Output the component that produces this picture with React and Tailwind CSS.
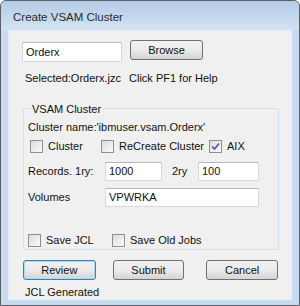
import { useState } from 'react'

function CheckBox({ checked, label, onChange, className = '' }) {
  return (
    <label className={`flex items-center gap-[5px] cursor-default ${className}`}>
      <span
        onClick={onChange}
        className="w-[13px] h-[13px] border border-[#8e8f8f] bg-gradient-to-br from-[#dcdcdc] to-[#fbfbfb] flex items-center justify-center shrink-0"
      >
        {checked && (
          <svg width="9" height="9" viewBox="0 0 9 9">
            <path d="M1 4.5 L3.5 7 L8 1.5" stroke="#4a5f97" strokeWidth="1.7" fill="none" />
          </svg>
        )}
      </span>
      <span>{label}</span>
    </label>
  )
}

function Button({ children, focused, className = '' }) {
  return (
    <button
      className={`h-[20px] rounded-[3px] border bg-gradient-to-b from-[#f2f2f2] via-[#ebebeb] to-[#d4d4d4] ${
        focused ? 'border-[#3c7fb1] shadow-[inset_0_0_0_1px_#a8dcf5]' : 'border-[#707070]'
      } ${className}`}
    >
      {children}
    </button>
  )
}

function TextBox({ value, className = '' }) {
  return (
    <div className={`bg-white border border-[#d5d8dc] border-t-[#b5b9bf] flex items-center px-[3px] ${className}`}>
      {value}
    </div>
  )
}

export default function App() {
  const [cluster, setCluster] = useState(false)
  const [recreate, setRecreate] = useState(false)
  const [aix, setAix] = useState(true)
  const [saveJcl, setSaveJcl] = useState(false)
  const [saveOld, setSaveOld] = useState(false)

  return (
    <div className="w-[300px] h-[306px] font-['Liberation_Sans',Arial,sans-serif] text-[11px] text-[#111]">
      <div className="w-full h-full border border-[#5a5f66] rounded-t-[6px] bg-[#c9dcef] flex flex-col">
        {/* title bar */}
        <div className="h-[29px] shrink-0 rounded-t-[6px] bg-gradient-to-b from-[#b3cce6] to-[#d3e3f2] flex items-center pl-[12px] pt-[4px] text-[11.5px] text-[#2a2a2a]">
          Create VSAM Cluster
        </div>

        {/* client area */}
        <div className="flex-1 mx-[7px] mb-[6px] bg-[#f0f0f0] border border-[#e4ebf3] flex flex-col px-[13px]">
          <div className="flex items-start gap-[8px] mt-[9px]">
            <TextBox value="Orderx" className="w-[100px] h-[20px] mt-[2px]" />
            <Button className="w-[73px]">Browse</Button>
          </div>

          <div className="flex mt-[9px] pl-[3px] h-[14px] items-center">
            <span className="w-[104px]">Selected:Orderx.jzc</span>
            <span>Click PF1 for Help</span>
          </div>

          {/* group box */}
          <div className="relative mt-[23px] ml-[1px] w-[256px] h-[142px] border border-[#d5dfe5] rounded-[2px] flex flex-col pl-[4px]">
            <span className="absolute -top-[8px] left-[6px] px-[2px] bg-[#f0f0f0]">VSAM Cluster</span>

            <div className="mt-[11px] h-[14px] flex items-center">Cluster name:'ibmuser.vsam.Orderx'</div>

            <div className="flex items-center mt-[5px] pl-[2px] h-[14px]">
              <CheckBox checked={cluster} onChange={() => setCluster(!cluster)} label="Cluster" className="w-[71px]" />
              <CheckBox checked={recreate} onChange={() => setRecreate(!recreate)} label="ReCreate Cluster" className="w-[108px]" />
              <CheckBox checked={aix} onChange={() => setAix(!aix)} label="AIX" />
            </div>

            <div className="flex items-center mt-[9px] h-[19px]">
              <span className="w-[77px]">Records. 1ry:</span>
              <TextBox value="1000" className="w-[57px] h-[19px]" />
              <span className="ml-[10px] w-[26px]">2ry</span>
              <TextBox value="100" className="w-[61px] h-[19px]" />
            </div>

            <div className="flex items-center mt-[7px] h-[19px]">
              <span className="w-[77px]">Volumes</span>
              <TextBox value="VPWRKA" className="w-[154px] h-[19px]" />
            </div>

            <div className="flex items-center mt-[26px] h-[14px]">
              <CheckBox checked={saveJcl} onChange={() => setSaveJcl(!saveJcl)} label="Save JCL" className="w-[84px]" />
              <CheckBox checked={saveOld} onChange={() => setSaveOld(!saveOld)} label="Save Old Jobs" />
            </div>
          </div>

          <div className="flex items-center mt-[10px] ml-[1px]">
            <Button focused className="w-[73px]">Review</Button>
            <Button className="w-[72px] ml-[17px]">Submit</Button>
            <Button className="w-[72px] ml-[22px]">Cancel</Button>
          </div>

          <div className="mt-[5px] pl-[3px] h-[14px] flex items-center">JCL Generated</div>
        </div>
      </div>
    </div>
  )
}
